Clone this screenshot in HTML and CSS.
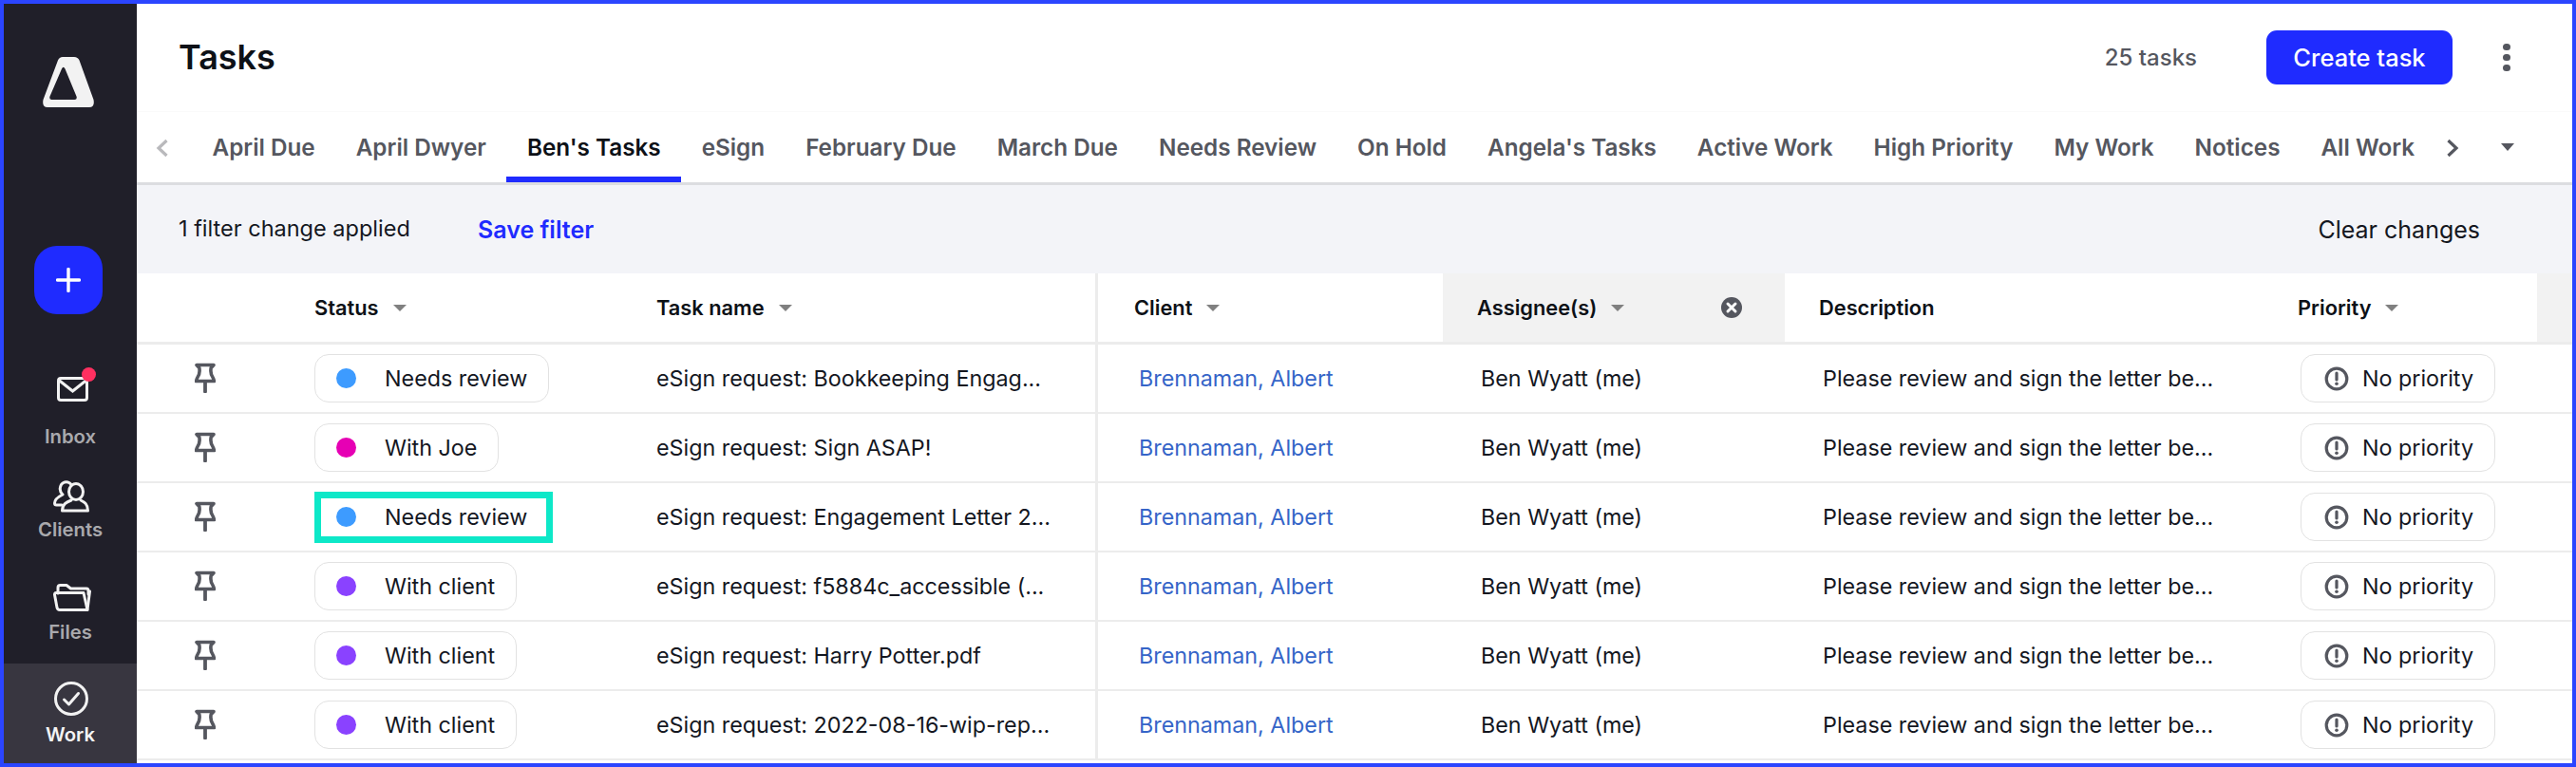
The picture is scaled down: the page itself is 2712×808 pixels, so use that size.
FILE: index.html
```html
<!DOCTYPE html>
<html lang="en">
<head>
<meta charset="utf-8">
<title>Tasks</title>
<link rel="stylesheet" href="styles.css">
</head>
<body>
<svg class="defs" width="0" height="0" aria-hidden="true">
  <symbol id="pin" viewBox="0 0 22 32">
    <path d="M2 2.500H20L17.200 5.500Q16 12 19.500 16.500L20.500 19.500H1.500L2.500 16.500Q6 12 4.800 5.500Z" fill="none" stroke="currentColor" stroke-width="3.600" stroke-linejoin="round"/>
    <path d="M11 20V30.500" fill="none" stroke="currentColor" stroke-width="3.800" stroke-linecap="round"/>
  </symbol>
  <symbol id="warn" viewBox="0 0 26 26">
    <circle cx="13" cy="13" r="10.800" fill="none" stroke="currentColor" stroke-width="3.200"/>
    <path d="M13 7V14" fill="none" stroke="currentColor" stroke-width="3.200" stroke-linecap="round"/>
    <circle cx="13" cy="18.300" r="1.800" fill="currentColor"/>
  </symbol>
</svg>
<div class="app">
  <aside class="sidebar">
    <svg class="logo" viewBox="0 0 54 53" width="54" height="53"><path fill-rule="evenodd" fill="#f2f2f2" d="M21 0H33Q37 0 38.500 3.500L53.500 45Q55 53 49 53H5Q-1 53 .5 45L16 3.500Q17.500 0 21 0ZM20 12.500L7.500 41.500Q6.500 45 9.500 45H33.500Q36.500 45 35.500 41.500L23.500 12.500Q21.700 9 20 12.500Z"/></svg>
    <div class="add-btn"><svg viewBox="0 0 26 26" width="26" height="26"><path d="M13 1.500V24.500M1.500 13H24.500" stroke="#fff" stroke-width="3.400" stroke-linecap="round" fill="none"/></svg></div>
    <nav class="nav">
      <div class="nav-item nav-inbox">
        <span class="inbox-icon">
          <svg viewBox="0 0 33 26" width="33" height="26"><rect x="1.500" y="1.500" width="30" height="23" rx="2.500" fill="none" stroke="#f2f2f2" stroke-width="3"/><path d="M2 3.500L16.500 15L31 3.500" fill="none" stroke="#f2f2f2" stroke-width="3"/></svg>
          <span class="badge"></span>
        </span>
        <span class="nav-label">Inbox</span>
      </div>
      <div class="nav-item nav-clients">
        <svg viewBox="0 0 38 34" width="38" height="34"><g fill="none" stroke="#f2f2f2" stroke-width="3" stroke-linecap="round" stroke-linejoin="round"><ellipse cx="24" cy="12" rx="7.500" ry="8.500"/><path d="M19 21C14 23 9.500 25 9.500 32H36.500C36.500 25 33 23 29 21"/><path d="M19 4.500A6.500 7 0 0 0 8.500 4.500C6 9 8 13 10 15C6 17 1.500 20 1.500 24Q1.500 26 3.500 26H9"/></g></svg>
        <span class="nav-label">Clients</span>
      </div>
      <div class="nav-item nav-files">
        <svg viewBox="0 0 40 29" width="40" height="29"><g fill="none" stroke="#f2f2f2" stroke-width="3" stroke-linecap="round" stroke-linejoin="round"><path d="M5 10V4Q5 1.500 7.500 1.500H14L18.500 5H35Q37 5 37 7.500V11"/><path d="M3 9.500H32L36 27.500H7Q4.500 27.500 4 25L1.500 11.500Q1.500 9.500 3 9.500Z"/><path d="M38.500 8L36 27"/></g></svg>
        <span class="nav-label">Files</span>
      </div>
      <div class="nav-item nav-work">
        <svg viewBox="0 0 36 36" width="36" height="36"><circle cx="18" cy="18" r="16.500" fill="none" stroke="#f2f2f2" stroke-width="3"/><path d="M10.500 19L15.500 24L25.500 12.500" fill="none" stroke="#f2f2f2" stroke-width="3" stroke-linecap="round" stroke-linejoin="round"/></svg>
        <span class="nav-label">Work</span>
      </div>
    </nav>
  </aside>
  <main class="main">
    <header class="topbar">
      <h1 class="title">Tasks</h1>
      <span class="count">25 tasks</span>
      <button class="create">Create task</button>
      <span class="kebab"><i></i><i></i><i></i></span>
    </header>
    <div class="tabs">
      <svg class="chev-left" viewBox="0 0 14 20" width="14" height="20"><path d="M11.500 2L3 10L11.500 18" fill="none" stroke="#b9b9bc" stroke-width="3.200"/></svg>
      <div class="tab-list">
        <span class="tab">April Due</span>
        <span class="tab">April Dwyer</span>
        <span class="tab active">Ben's Tasks</span>
        <span class="tab">eSign</span>
        <span class="tab">February Due</span>
        <span class="tab">March Due</span>
        <span class="tab">Needs Review</span>
        <span class="tab">On Hold</span>
        <span class="tab">Angela's Tasks</span>
        <span class="tab">Active Work</span>
        <span class="tab">High Priority</span>
        <span class="tab">My Work</span>
        <span class="tab">Notices</span>
        <span class="tab">All Work</span>
      </div>
      <svg class="chev-right" viewBox="0 0 14 20" width="14" height="20"><path d="M2.500 2L11 10L2.500 18" fill="none" stroke="#55575f" stroke-width="3.200"/></svg>
      <span class="tabs-caret"></span>
    </div>
    <div class="filterbar">
      <span class="filter-text">1 filter change applied</span>
      <span class="save">Save filter</span>
      <span class="clear">Clear changes</span>
    </div>
    <div class="table">
      <div class="row head">
        <div class="cell"></div>
        <div class="cell">Status<span class="caret"></span></div>
        <div class="cell">Task name<span class="caret"></span></div>
        <div class="cell c-client">Client<span class="caret"></span></div>
        <div class="cell c-assignee sorted">Assignee(s)<span class="caret"></span>
          <svg class="clear-x" viewBox="0 0 22 22" width="22" height="22"><circle cx="11" cy="11" r="11" fill="#55575f"/><path d="M7 7L15 15M15 7L7 15" stroke="#fff" stroke-width="3" stroke-linecap="round"/></svg>
        </div>
        <div class="cell c-desc">Description</div>
        <div class="cell c-priority">Priority<span class="caret"></span></div>
        <div class="cell tail"></div>
      </div>
      <div class="row">
        <div class="cell c-pin"><svg class="pin" width="22" height="32"><use href="#pin"/></svg></div>
        <div class="cell"><span class="pill"><span class="dot blue"></span>Needs review</span></div>
        <div class="cell">eSign request: Bookkeeping Engag...</div>
        <div class="cell c-client"><span class="link">Brennaman, Albert</span></div>
        <div class="cell c-assignee">Ben Wyatt (me)</div>
        <div class="cell c-desc">Please review and sign the letter be...</div>
        <div class="cell c-priority"><span class="pill prio"><svg class="warn" width="26" height="26"><use href="#warn"/></svg>No priority</span></div>
      </div>
      <div class="row">
        <div class="cell c-pin"><svg class="pin" width="22" height="32"><use href="#pin"/></svg></div>
        <div class="cell"><span class="pill"><span class="dot pink"></span>With Joe</span></div>
        <div class="cell">eSign request: Sign ASAP!</div>
        <div class="cell c-client"><span class="link">Brennaman, Albert</span></div>
        <div class="cell c-assignee">Ben Wyatt (me)</div>
        <div class="cell c-desc">Please review and sign the letter be...</div>
        <div class="cell c-priority"><span class="pill prio"><svg class="warn" width="26" height="26"><use href="#warn"/></svg>No priority</span></div>
      </div>
      <div class="row">
        <div class="cell c-pin"><svg class="pin" width="22" height="32"><use href="#pin"/></svg></div>
        <div class="cell"><span class="pill focused"><span class="dot blue"></span>Needs review</span></div>
        <div class="cell">eSign request: Engagement Letter 2...</div>
        <div class="cell c-client"><span class="link">Brennaman, Albert</span></div>
        <div class="cell c-assignee">Ben Wyatt (me)</div>
        <div class="cell c-desc">Please review and sign the letter be...</div>
        <div class="cell c-priority"><span class="pill prio"><svg class="warn" width="26" height="26"><use href="#warn"/></svg>No priority</span></div>
      </div>
      <div class="row">
        <div class="cell c-pin"><svg class="pin" width="22" height="32"><use href="#pin"/></svg></div>
        <div class="cell"><span class="pill"><span class="dot violet"></span>With client</span></div>
        <div class="cell">eSign request: f5884c_accessible (...</div>
        <div class="cell c-client"><span class="link">Brennaman, Albert</span></div>
        <div class="cell c-assignee">Ben Wyatt (me)</div>
        <div class="cell c-desc">Please review and sign the letter be...</div>
        <div class="cell c-priority"><span class="pill prio"><svg class="warn" width="26" height="26"><use href="#warn"/></svg>No priority</span></div>
      </div>
      <div class="row">
        <div class="cell c-pin"><svg class="pin" width="22" height="32"><use href="#pin"/></svg></div>
        <div class="cell"><span class="pill"><span class="dot violet"></span>With client</span></div>
        <div class="cell">eSign request: Harry Potter.pdf</div>
        <div class="cell c-client"><span class="link">Brennaman, Albert</span></div>
        <div class="cell c-assignee">Ben Wyatt (me)</div>
        <div class="cell c-desc">Please review and sign the letter be...</div>
        <div class="cell c-priority"><span class="pill prio"><svg class="warn" width="26" height="26"><use href="#warn"/></svg>No priority</span></div>
      </div>
      <div class="row">
        <div class="cell c-pin"><svg class="pin" width="22" height="32"><use href="#pin"/></svg></div>
        <div class="cell"><span class="pill"><span class="dot violet"></span>With client</span></div>
        <div class="cell">eSign request: 2022-08-16-wip-rep...</div>
        <div class="cell c-client"><span class="link">Brennaman, Albert</span></div>
        <div class="cell c-assignee">Ben Wyatt (me)</div>
        <div class="cell c-desc">Please review and sign the letter be...</div>
        <div class="cell c-priority"><span class="pill prio"><svg class="warn" width="26" height="26"><use href="#warn"/></svg>No priority</span></div>
      </div>
    </div>
  </main>
</div>
</body>
</html>
```
FILE: styles.css
```css
* { box-sizing: border-box; }
html, body { margin: 0; padding: 0; }
body { font-family: Inter, "Liberation Sans", sans-serif; color: #14171f; background: #fff; }
.defs { position: absolute; }
.app { display: flex; width: 2712px; height: 808px; border: 4px solid #2b45ff; overflow: hidden; }

.sidebar { width: 140px; flex: none; background: #201f29; display: flex; flex-direction: column; align-items: center; }
.logo { margin-top: 56px; margin-right: 4px; display: block; }
.add-btn { width: 72px; height: 72px; margin-top: 146px; margin-right: 4px; border-radius: 24px; background: #1f2bff; display: flex; align-items: center; justify-content: center; }
.add-btn svg { display: block; }
.nav { margin-top: auto; width: 100%; display: flex; flex-direction: column; }
.nav-item { display: flex; flex-direction: column; align-items: center; justify-content: flex-end; padding-bottom: 21px; }
.nav-item svg { display: block; margin-left: 2px; }
.nav-label { font-size: 20.300px; line-height: 24px; font-weight: 600; color: #a9a9ad; }
.nav-inbox { height: 113px; }
.nav-inbox .inbox-icon { position: relative; display: block; margin-bottom: 25px; margin-left: 3px; }
.badge { position: absolute; top: -10px; right: -8px; width: 15px; height: 15px; border-radius: 50%; background: #ff3060; }
.nav-clients { height: 98px; }
.nav-clients svg { margin-bottom: 6px; }
.nav-files { height: 108px; }
.nav-files svg { margin-bottom: 10px; margin-left: 4px; }
.nav-work { height: 105px; background: #383640; padding-bottom: 18px; }
.nav-work svg { margin-bottom: 8px; }
.nav-work .nav-label { color: #f4f4f4; }

.main { flex: 1; min-width: 0; display: flex; flex-direction: column; }
.topbar { height: 114px; flex: none; display: flex; align-items: center; padding-left: 44px; border-bottom: 1px solid #fafafa; }
.title { margin: 0 0 2px; font-size: 36px; font-weight: 600; line-height: 44px; color: #0d1117; flex: 1; }
.count { font-size: 24px; font-weight: 500; color: #55575f; margin-right: 73px; }
.create { width: 196px; height: 57px; border: 0; border-radius: 11px; background: #1f2bff; color: #fff; font-family: inherit; font-size: 25.500px; font-weight: 500; padding: 0; }
.kebab { width: 8px; margin-left: 53px; margin-right: 65px; display: flex; flex-direction: column; gap: 3.500px; }
.kebab i { display: block; width: 7.500px; height: 7.500px; border-radius: 50%; background: #55575f; }

.tabs { height: 77px; flex: none; display: flex; align-items: stretch; border-bottom: 3px solid #dcdde0; }
.chev-left { align-self: center; margin-left: 20px; margin-top: 2px; flex: none; }
.tab-list { display: flex; margin-left: 24px; }
.tab { display: flex; align-items: center; padding: 6px 21.500px 0; font-size: 24.280px; font-weight: 600; color: #55575f; border-bottom: 6px solid transparent; white-space: nowrap; }
.tab.active { color: #0d1117; border-bottom-color: #1f2bff; }
.chev-right { align-self: center; margin-left: 11px; margin-top: 2px; flex: none; }
.tabs-caret { align-self: center; margin-left: 44px; width: 0; height: 0; border-left: 7.500px solid transparent; border-right: 7.500px solid transparent; border-top: 8px solid #55575f; }

.filterbar { height: 93px; flex: none; background: #f3f4f8; display: flex; align-items: center; padding-left: 44px; font-size: 23.500px; color: #14171f; }
.filter-text { width: 315px; margin-bottom: 2px; }
.save { color: #1f2bff; font-weight: 600; font-size: 25px; }
.clear { margin-left: auto; margin-right: 97px; font-size: 25px; }

.table { flex: 1; overflow: hidden; font-size: 23.300px; }
.row { display: grid; grid-template-columns: 187px 360px 462px 366px 360px 512px 280px 37px; height: 73px; border-bottom: 2px solid #ececec; }
.cell { display: flex; align-items: center; min-width: 0; white-space: nowrap; }
.head { height: 75px; border-bottom-width: 3px; font-weight: 600; font-size: 21.800px; color: #0d1117; }
.caret { width: 0; height: 0; margin-left: 15px; border-left: 7.500px solid transparent; border-right: 7.500px solid transparent; border-top: 7px solid #808080; }
.c-pin { padding-left: 61px; }
.pin { color: #55575f; display: block; margin-bottom: 2px; }
.c-client { border-left: 3px solid #ececec; padding-left: 43px; }
.head .c-client { padding-left: 38px; }
.c-assignee { padding-left: 40px; }
.head .c-assignee { padding-left: 36px; }
.sorted { background: #f2f2f2; }
.clear-x { margin-left: auto; margin-right: 45px; display: block; }
.c-desc { padding-left: 40px; }
.head .c-desc { padding-left: 36px; }
.c-priority { padding-left: 31px; }
.head .c-priority { padding-left: 28px; }
.tail { background: #f2f2f2; }
.link { color: #3565c8; }

.pill { display: inline-flex; align-items: center; height: 51px; padding: 0 22px 0 22px; border: 1.500px solid #e2e2e2; border-radius: 15px; background: #fff; }
.dot { width: 21px; height: 21px; border-radius: 50%; margin-right: 30px; flex: none; }
.blue { background: #3d9bff; }
.pink { background: #e600b4; }
.violet { background: #8a42ff; }
.focused { height: 54px; border: 7px solid #0de8c8; border-radius: 0; padding: 0 20px 0 16px; }
.prio { padding: 0 22px 0 24px; }
.warn { color: #55575f; margin-right: 14px; display: block; }
```
